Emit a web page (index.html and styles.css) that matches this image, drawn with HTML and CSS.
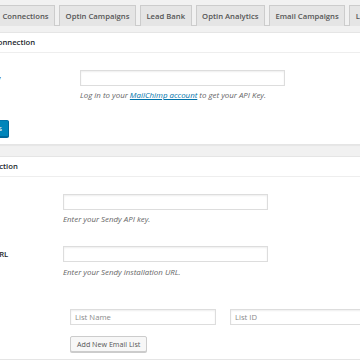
FILE: index.html
```html
<!DOCTYPE html>
<html>
<head>
<meta charset="utf-8">
<link rel="stylesheet" href="styles.css">
</head>
<body>
<div class="wrap">
  <nav class="tabs">
    <a class="tab">Connections</a>
    <a class="tab">Optin Campaigns</a>
    <a class="tab">Lead Bank</a>
    <a class="tab">Optin Analytics</a>
    <a class="tab">Email Campaigns</a>
    <a class="tab">Lead Forms</a>
  </nav>

  <section class="panel">
    <h2 class="panel-title">MailChimp Connection</h2>
    <div class="panel-body">
      <div class="row row-mc">
        <label class="label label-mc">API Key</label>
        <div class="field">
          <input class="text-input wide" type="text">
          <p class="desc">Log in to your <a href="#">MailChimp account</a> to get your API Key.</p>
        </div>
      </div>
      <div class="actions">
        <button class="btn btn-primary">Save Settings</button>
      </div>
    </div>
  </section>

  <section class="panel panel-sendy">
    <h2 class="panel-title">Sendy Connection</h2>
    <div class="panel-body">
      <div class="row row-sendy">
        <label class="label">API Key</label>
        <div class="field">
          <input class="text-input wide" type="text">
          <p class="desc">Enter your Sendy API key.</p>
        </div>
      </div>
      <div class="row row-sendy row-next">
        <label class="label">Sendy URL</label>
        <div class="field">
          <input class="text-input wide" type="text">
          <p class="desc">Enter your Sendy installation URL.</p>
        </div>
      </div>
      <div class="row row-sendy row-lists">
        <span class="label"></span>
        <div class="field list-field">
          <div class="list-inputs">
            <input class="text-input list-name" type="text" placeholder="List Name">
            <input class="text-input list-id" type="text" placeholder="List ID">
          </div>
          <div class="list-actions">
            <button class="btn btn-secondary">Add New Email List</button>
          </div>
        </div>
      </div>
    </div>
  </section>
</div>
</body>
</html>
```

FILE: styles.css
```css
* { box-sizing: border-box; }

body {
  margin: 0;
  background: #f1f1f1;
  font-family: "Open Sans", "Liberation Sans", sans-serif;
  color: #444;
  overflow: hidden;
}

.wrap {
  margin-left: -50px;
  width: 520px;
  padding-top: 5px;
}

.tabs {
  display: flex;
  gap: 4px;
  padding-left: 46px;
  border-bottom: 1px solid #ccc;
  white-space: nowrap;
}

.tab {
  display: block;
  height: 21px;
  padding: 0 5.5px;
  line-height: 20px;
  font-size: 7.7px;
  font-weight: 600;
  color: #555;
  background: #e5e5e5;
  border: 1px solid #ccc;
  border-bottom: none;
  margin-bottom: -1px;
  text-decoration: none;
}

.panel {
  margin-top: 6px;
  background: #fff;
  border: 1px solid #e5e5e5;
  box-shadow: 0 1px 1px rgba(0, 0, 0, 0.04);
}

.panel-sendy {
  margin-top: 11px;
}

.panel-title {
  margin: 0;
  height: 20px;
  padding: 0;
  line-height: 19px;
  font-size: 7.7px;
  font-weight: 600;
  color: #23282d;
  border-bottom: 1px solid #eee;
}

.panel-body {
  padding: 17px 0 7px;
}

.row {
  display: grid;
  grid-template-columns: 129px 1fr;
  align-items: start;
}

.row-sendy {
  grid-template-columns: 112px 1fr;
}

.row-next {
  margin-top: 22px;
}

.row-lists {
  margin-top: 32px;
}

.label {
  padding-left: 22px;
  line-height: 16px;
  font-size: 7.7px;
  font-weight: 600;
  color: #23282d;
}

.row-sendy .label {
  padding-left: 18px;
}

.text-input {
  display: block;
  height: 16px;
  margin: 0;
  padding: 0 4px;
  font-family: inherit;
  font-size: 7.7px;
  color: #32373c;
  background: #fff;
  border: 1px solid #ddd;
  box-shadow: inset 0 1px 2px rgba(0, 0, 0, 0.07);
  outline: none;
}

.text-input::placeholder {
  color: #8a8a8a;
}

.wide {
  width: 205px;
}

.desc {
  margin: 4px 0 0;
  line-height: 10px;
  font-size: 7.9px;
  font-style: italic;
  color: #666;
}

.row-next .desc {
  margin-top: 5px;
}

.desc a {
  color: #0073aa;
  text-decoration: underline;
}

.actions {
  display: flex;
  margin-top: 20px;
  padding-left: 0;
}

.btn {
  display: block;
  height: 17px;
  padding: 0 6px;
  font-family: inherit;
  font-size: 7.15px;
  line-height: 15px;
  border-radius: 2px;
  white-space: nowrap;
  cursor: pointer;
}

.btn-primary {
  color: #fff;
  background: #0085ba;
  border: 1px solid #0073aa;
  border-color: #0073aa #006799 #006799;
  box-shadow: 0 1px 0 #006799;
}

.list-field {
  padding-left: 7px;
}

.list-inputs {
  display: flex;
  gap: 14px;
}

.list-name {
  width: 146px;
}

.list-id {
  width: 220px;
}

.list-actions {
  display: flex;
  margin-top: 11px;
}

.btn-secondary {
  height: 16px;
  line-height: 14px;
  color: #555;
  background: #f7f7f7;
  border: 1px solid #ccc;
  box-shadow: 0 1px 0 #ccc;
}
```
